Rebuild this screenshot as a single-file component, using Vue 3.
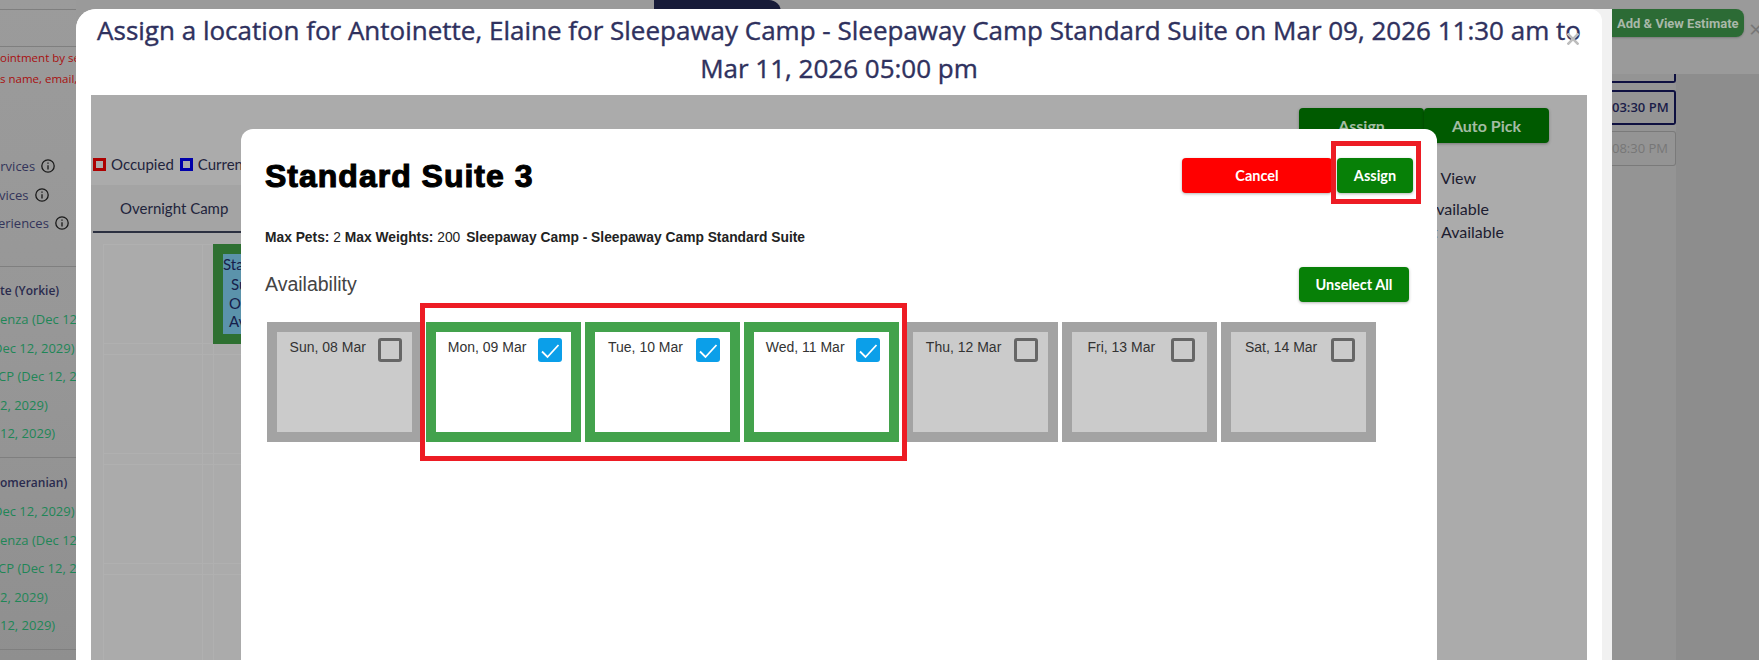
<template>
  <div class="page">
    <aside class="sidebar">
      <hr class="rule first">
      <hr class="rule">
      <p class="note">ointment by se</p>
      <p class="note">s name, email,</p>
      <div class="services">
        <div v-for="s in services" :key="s.text" class="service" :style="{ marginLeft: s.cut + 'px' }">
          <span>{{ s.text }}</span>
          <svg width="14" height="14" viewBox="0 0 14 14" fill="none" stroke="#1a1a1a" stroke-width="1.3">
            <circle cx="7" cy="7" r="6.2" />
            <path d="M7 6.2V10.4M7 3.6V4.8" />
          </svg>
        </div>
      </div>
      <hr class="rule pets-rule">
      <div v-for="pet in pets" :key="pet.name" class="pet">
        <div class="pet-name">{{ pet.name }}</div>
        <div v-for="v in pet.items" :key="v" class="vaccine" :style="{ marginLeft: cutFor(v) + 'px' }">{{ v }}</div>
        <hr class="rule pet-end">
      </div>
    </aside>

    <main class="center">
      <div class="top-tab"></div>
    </main>

    <aside class="side">
      <div class="side-head">
        <button class="estimate">Add &amp; View Estimate</button>
        <span class="side-x">×</span>
      </div>
      <div class="side-body">
        <div class="slot slot-on">03:30 PM</div>
        <div class="slot slot-off">08:30 PM</div>
      </div>
    </aside>

    <!-- first modal -->
    <div class="modal">
      <div class="modal-white">
        <h4 class="modal-title">
          Assign a location for Antoinette, Elaine for Sleepaway Camp - Sleepaway Camp Standard Suite on Mar 09, 2026 11:30 am to Mar 11, 2026 05:00 pm
        </h4>
        <svg class="modal-x" width="12" height="12" viewBox="0 0 12 12" stroke="#bdbdbd" stroke-width="2.6">
          <path d="M0.5 0.5L11.5 11.5M11.5 0.5L0.5 11.5" />
        </svg>
        <div class="board">
          <div class="board-actions">
            <button class="dark-btn">Assign</button>
            <button class="dark-btn">Auto Pick</button>
          </div>
          <div class="board-body">
            <div class="board-left">
              <div class="legend">
                <i class="swatch occupied"></i><span>Occupied</span>
                <i class="swatch current"></i><span>Current</span>
              </div>
              <div class="tabs">
                <div class="tab">Overnight Camp</div>
              </div>
              <div class="rooms">
                <div class="room">
                  <div class="room-inner">
                    <div>Standard</div>
                    <div class="ind1">Suite</div>
                    <div class="ind2">Occupied</div>
                    <div class="ind2">Available</div>
                  </div>
                </div>
              </div>
            </div>
            <div class="board-right">
              <div class="key key-view">Grid View</div>
              <div class="key key-avail">Available</div>
              <div class="key key-not">Not Available</div>
            </div>
          </div>
        </div>
      </div>
    </div>

    <!-- second modal on top -->
    <div class="picker">
      <div class="picker-head">
        <h2 class="picker-title">Standard Suite 3</h2>
        <div class="picker-btns">
          <button class="btn btn-cancel">Cancel</button>
          <button class="btn btn-assign">Assign</button>
        </div>
      </div>
      <p class="meta">
        <b>Max Pets:</b> 2 <b>Max Weights:</b> 200 <b class="meta-svc">Sleepaway Camp - Sleepaway Camp Standard Suite</b>
      </p>
      <div class="avail-row">
        <span class="avail-title">Availability</span>
        <button class="btn btn-unselect">Unselect All</button>
      </div>
      <div class="days">
        <div v-for="d in days" :key="d.label" class="day" :class="{ picked: d.picked }">
          <div class="day-inner">
            <span class="day-label">{{ d.label }}</span>
            <span class="check">
              <svg v-if="d.picked" width="24" height="24" viewBox="0 0 24 24" fill="none" stroke="#fff" stroke-width="1.8">
                <path d="M4 13.5L9.5 19L20.5 7" />
              </svg>
            </span>
          </div>
        </div>
      </div>
      <div class="mark mark-assign"></div>
      <div class="mark mark-days"></div>
    </div>
  </div>
</template>

<script setup>
const services = [
  { text: 'ervices', cut: -7 },
  { text: 'vices', cut: -1 },
  { text: 'periences', cut: -10 }
]

const pets = [
  {
    name: 'te (Yorkie)',
    items: ['enza (Dec 12, 2029)', 'Dec 12, 2029)', 'CP (Dec 12, 2029)', '2, 2029)', '12, 2029)']
  },
  {
    name: 'omeranian)',
    items: ['Dec 12, 2029)', 'enza (Dec 12, 2029)', 'CP (Dec 12, 2029)', '2, 2029)', '12, 2029)']
  }
]

// rows are cut by the modal, some start a little further left
const cutFor = (text) => {
  if (text.startsWith('Dec')) return -7
  if (text.startsWith('CP')) return -2
  return 0
}

const days = [
  { label: 'Sun, 08 Mar', picked: false },
  { label: 'Mon, 09 Mar', picked: true },
  { label: 'Tue, 10 Mar', picked: true },
  { label: 'Wed, 11 Mar', picked: true },
  { label: 'Thu, 12 Mar', picked: false },
  { label: 'Fri, 13 Mar', picked: false },
  { label: 'Sat, 14 Mar', picked: false }
]
</script>

<style>
html, body {
  margin: 0;
  overflow: hidden;
}
</style>

<style scoped>
.page {
  position: relative;
  width: 1759px;
  height: 660px;
  overflow: hidden;
  display: flex;
  background: #9a9a9a;
  font-family: "Open Sans", sans-serif;
}

/* left page, dimmed */
.sidebar {
  width: 76px;
  flex-shrink: 0;
  overflow: hidden;
  white-space: nowrap;
  font-size: 13px;
  background: linear-gradient(180deg, #9b9b9b 0%, #979797 50%, #8f8f8f 100%);
}
.rule {
  margin: 0;
  border: none;
  border-top: 1px solid #7f7f7f;
}
.rule.first {
  margin-top: 9px;
  margin-bottom: 36px;
}
.note {
  margin: 0;
  height: 21px;
  line-height: 21px;
  font-size: 11.5px;
  color: #a81010;
}
.services {
  margin-top: 63px;
}
.service {
  height: 28.5px;
  display: flex;
  align-items: center;
  gap: 6px;
  color: #33345a;
}
.service svg {
  flex-shrink: 0;
}
.pets-rule {
  margin-top: 28px;
}
.pet {
  padding-top: 10px;
}
.pet + .pet {
  padding-top: 11px;
}
.pet-name,
.vaccine {
  height: 28.5px;
  line-height: 28.5px;
}
.pet-name {
  font-size: 12px;
  color: #2a2b4e;
  font-weight: 600;
}
.vaccine {
  color: #1f8657;
}
.pet-end {
  margin-top: 9px;
}

.center {
  flex: 1;
  padding-left: 578px;
}
.top-tab {
  width: 127px;
  height: 30px;
  background: #171b38;
  border-top-right-radius: 12px;
}

/* right page, dimmed */
.side {
  width: 147px;
  flex-shrink: 0;
  display: flex;
  flex-direction: column;
  background: #8d8d8d;
}
.side-head {
  height: 74px;
  position: relative;
  background: #9a9a9a;
  padding-top: 9px;
  box-sizing: border-box;
}
.estimate {
  display: block;
  width: 132px;
  height: 28px;
  padding: 0 0 0 5px;
  border: none;
  border-radius: 0 8px 8px 0;
  background: #2c6b35;
  color: #a9b8a9;
  font-family: Roboto, sans-serif;
  font-size: 13px;
  font-weight: 700;
  text-align: left;
  box-shadow: 0 1px 2px rgba(0, 0, 0, 0.2);
}
.side-x {
  position: absolute;
  left: 137px;
  top: 11px;
  color: #777;
  font-size: 24px;
  line-height: 36px;
}
.side-body {
  width: 64px;
  padding-top: 16px;
  background: #949494;
  flex: 1;
}
.slot {
  width: 64px;
  box-sizing: border-box;
  border-radius: 0 3px 3px 0;
  text-align: right;
  padding-right: 11px;
  font-size: 13px;
  white-space: nowrap;
}
.slot-on {
  height: 35px;
  line-height: 31px;
  border: 2px solid #0e1040;
  border-left: none;
  font-weight: 600;
  color: #1a1c48;
  position: relative;
}
/* bottom edge of the slot above, the header band covers the rest */
.slot-on::before {
  content: "";
  position: absolute;
  right: -2px;
  top: -18px;
  width: 100%;
  height: 7px;
  border: 2px solid #0e1040;
  border-top: none;
  border-left: none;
  border-radius: 0 0 3px 0;
}
.slot-off {
  height: 35px;
  line-height: 33px;
  margin-top: 6px;
  border: 1px solid #7a7a7a;
  border-left: none;
  color: #777;
}

/* first modal */
.modal {
  position: absolute;
  left: 76px;
  top: 9px;
  width: 1536px;
  height: 651px;
  background: #f1f1f1;
  border-top-left-radius: 20px;
}
.modal-white {
  position: relative;
  width: 1526px;
  height: 100%;
  background: #fff;
  border-radius: 20px 12px 0 0;
  display: flex;
  flex-direction: column;
  overflow: hidden;
}
.modal-title {
  flex-shrink: 0;
  margin: 0;
  height: 86px;
  padding: 2px 15px 0;
  box-sizing: border-box;
  text-align: center;
  font-size: 26px;
  line-height: 38px;
  font-weight: 400;
  color: #2f315e;
  -webkit-text-stroke: 0.4px #2f315e;
}
.modal-x {
  position: absolute;
  left: 1491px;
  top: 24px;
}
.board {
  flex: 1;
  min-height: 0;
  margin: 0 15px;
  padding-top: 13px;
  background: #ababab;
  font-family: Lato, sans-serif;
}
.board-actions {
  display: flex;
  justify-content: flex-end;
  padding-right: 38px;
}
.dark-btn {
  width: 125px;
  height: 35px;
  border: none;
  border-radius: 4px;
  background: #005a00;
  color: #a4bca4;
  font-family: Lato, sans-serif;
  font-size: 16px;
  font-weight: 700;
  box-shadow: 0 1px 3px rgba(0, 0, 0, 0.3);
}
.board-body {
  display: flex;
}
.board-left {
  flex: 1;
}
.legend {
  display: flex;
  align-items: center;
  height: 42px;
  padding: 0 0 0 2px;
  box-sizing: border-box;
  font-size: 15px;
  color: #22243c;
}
.swatch {
  width: 13px;
  height: 13px;
  box-sizing: border-box;
  border: 3px solid;
  margin-right: 5px;
}
.occupied {
  border-color: #ad0000;
}
.current {
  border-color: #0000aa;
  margin-left: 6px;
}
.tabs {
  height: 48px;
  padding-left: 2px;
  background: #a4a4a4;
  display: flex;
}
.tab {
  width: 160px;
  box-sizing: border-box;
  padding-left: 27px;
  line-height: 46px;
  font-size: 15px;
  color: #22243c;
  border-bottom: 2px solid #2b3040;
}
.rooms {
  margin: 11px 0 0 12px;
  height: 430px;
  background:
    repeating-linear-gradient(to bottom, #b0b0b0 0 1px, transparent 1px 99px, #b0b0b0 99px 100px, transparent 100px 110px),
    repeating-linear-gradient(to right, #b0b0b0 0 1px, transparent 1px 99px, #b0b0b0 99px 100px, transparent 100px 110px);
}
.room {
  width: 140px;
  height: 100px;
  margin-left: 110px;
  padding: 10px;
  box-sizing: border-box;
  background: #2e7031;
}
.room-inner {
  height: 80px;
  background: #5b93ab;
  font-size: 15px;
  line-height: 20px;
  color: #16204a;
  white-space: nowrap;
  overflow: hidden;
}
.ind1 {
  padding-left: 8px;
}
.ind2 {
  padding-left: 6px;
  line-height: 18px;
}
.board-right {
  width: 187px;
  padding-top: 25px;
  flex-shrink: 0;
  font-size: 16px;
  color: #1c1c30;
}
.key {
  height: 20px;
  line-height: 20px;
  text-align: right;
  white-space: nowrap;
}
.key-view {
  width: 76px;
}
.key-avail {
  width: 89px;
  margin-top: 11px;
}
.key-not {
  width: 104px;
  margin-top: 3px;
}

/* second modal */
.picker {
  position: absolute;
  left: 241px;
  top: 129px;
  width: 1196px;
  height: 531px;
  box-sizing: border-box;
  padding: 29px 24px 0;
  background: #fff;
  border-radius: 12px 12px 0 0;
  font-family: "Liberation Sans", Arial, sans-serif;
}
.picker-head {
  display: flex;
  justify-content: space-between;
  align-items: center;
}
.picker-title {
  margin: 1px 0 -1px;
  font-size: 32px;
  line-height: 35px;
  font-weight: 700;
  letter-spacing: 1px;
  color: #000;
  -webkit-text-stroke: 1.1px #000;
}
.picker-btns {
  display: flex;
  gap: 5px;
}
.btn {
  height: 35px;
  border: none;
  border-radius: 4px;
  color: #fff;
  font-family: Lato, sans-serif;
  font-size: 14.5px;
  font-weight: 700;
  box-shadow: 0 1px 3px rgba(0, 0, 0, 0.3);
}
.btn-cancel {
  width: 150px;
  background: #ff0000;
}
.btn-assign {
  width: 76px;
  background: #078007;
}
.meta {
  margin: 37px 0 -1px;
  font-size: 13.8px;
  line-height: 16px;
  color: #222;
}
.meta-svc {
  margin-left: 2px;
}
.avail-row {
  margin-top: 22px;
  padding-right: 4px;
  display: flex;
  justify-content: space-between;
  align-items: center;
}
.avail-title {
  font-size: 19.5px;
  color: #444;
}
.btn-unselect {
  width: 110px;
  background: #078007;
}
.days {
  display: flex;
  gap: 4px;
  margin: 20px 0 0 2px;
}
.day {
  width: 155px;
  height: 120px;
  padding: 10px;
  box-sizing: border-box;
  background: #a3a3a3;
}
.day-inner {
  height: 100px;
  display: flex;
  justify-content: space-evenly;
  align-items: flex-start;
  padding-top: 6px;
  box-sizing: border-box;
  background: #cbcbcb;
}
.day-label {
  font-size: 14px;
  line-height: 18px;
  color: #333;
}
.check {
  width: 24px;
  height: 24px;
  margin-right: -3px;
  box-sizing: border-box;
  border: 3px solid #666;
  border-radius: 3px;
}
.picked {
  background: #43a24c;
}
.picked .day-inner {
  background: #fff;
}
.picked .check {
  border: none;
  background: #0b9fe9;
}
.mark {
  position: absolute;
  box-sizing: border-box;
  border: 5px solid #ed1c24;
  pointer-events: none;
}
.mark-assign {
  left: 1090px;
  top: 12px;
  width: 90px;
  height: 63px;
}
.mark-days {
  left: 179px;
  top: 174px;
  width: 487px;
  height: 158px;
}
</style>
